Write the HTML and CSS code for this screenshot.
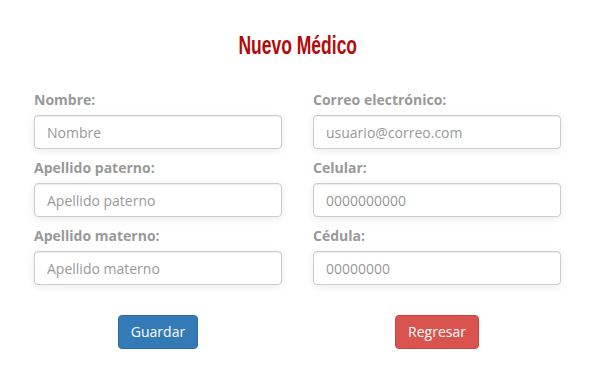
FILE: index.html
```html
<!DOCTYPE html>
<html lang="es">
<head>
    <meta charset="UTF-8">
    <title>Nuevo Médico</title>
    <link rel="stylesheet" href="styles.css">
</head>
<body>
    <div class="page">
        <h2 class="title"><span>Nuevo Médico</span></h2>
        <form class="form">
            <div class="fields">
                <div class="field">
                    <label>Nombre:</label>
                    <input type="text" placeholder="Nombre">
                </div>
                <div class="field">
                    <label>Correo electrónico:</label>
                    <input type="text" placeholder="usuario@correo.com">
                </div>
                <div class="field">
                    <label>Apellido paterno:</label>
                    <input type="text" placeholder="Apellido paterno">
                </div>
                <div class="field">
                    <label>Celular:</label>
                    <input type="text" placeholder="0000000000">
                </div>
                <div class="field">
                    <label>Apellido materno:</label>
                    <input type="text" placeholder="Apellido materno">
                </div>
                <div class="field">
                    <label>Cédula:</label>
                    <input type="text" placeholder="00000000">
                </div>
            </div>
            <div class="actions">
                <div class="action"><button type="button" class="btn btn-primary">Guardar</button></div>
                <div class="action"><button type="button" class="btn btn-danger">Regresar</button></div>
            </div>
        </form>
    </div>
</body>
</html>
```

FILE: styles.css
```css
body {
    margin: 0;
    background-color: white;
    font-family: "Open Sans", "Noto Sans", sans-serif;
    font-size: 14px;
    color: #333;
}
.page {
    width: 596px;
    padding-top: 30px;
}
.title {
    margin: 0;
    text-align: center;
    font-family: "Liberation Sans", Arial, sans-serif;
    font-weight: bold;
    font-size: 25px;
    line-height: 30px;
    color: #b30b0b;
}
/* condensed look of the heading font */
.title span {
    display: inline-block;
    transform: scaleX(0.7);
}
.form {
    padding: 30px 35px 0 34px;
}
.fields {
    display: grid;
    grid-template-columns: 248px 248px;
    column-gap: 31px;
    row-gap: 9px;
}
.field label {
    display: block;
    font-weight: bold;
    font-size: 14px;
    line-height: 20px;
    color: #999;
    margin-bottom: 5px;
}
.field input {
    display: block;
    width: 100%;
    height: 34px;
    box-sizing: border-box;
    padding: 6px 12px;
    border: 1px solid #ccc;
    border-radius: 4px;
    font-family: "Open Sans", "Noto Sans", sans-serif;
    font-size: 14px;
    color: #555;
    background-color: white;
    box-shadow: inset 0 1px 1px rgba(0, 0, 0, 0.075), 0 2px 8px rgba(0, 0, 0, 0.08);
}
.field input::placeholder {
    color: #999;
}
.actions {
    display: grid;
    grid-template-columns: 248px 248px;
    column-gap: 31px;
    margin-top: 30px;
}
.action {
    display: flex;
    justify-content: center;
}
.btn {
    font-family: "Open Sans", "Noto Sans", sans-serif;
    font-size: 14px;
    line-height: 20px;
    padding: 6px 12px;
    border: 1px solid transparent;
    border-radius: 4px;
    color: white;
    cursor: pointer;
}
.btn-primary {
    background-color: #337ab7;
    border-color: #2e6da4;
}
.btn-danger {
    background-color: #d9534f;
    border-color: #d43f3a;
}
```
